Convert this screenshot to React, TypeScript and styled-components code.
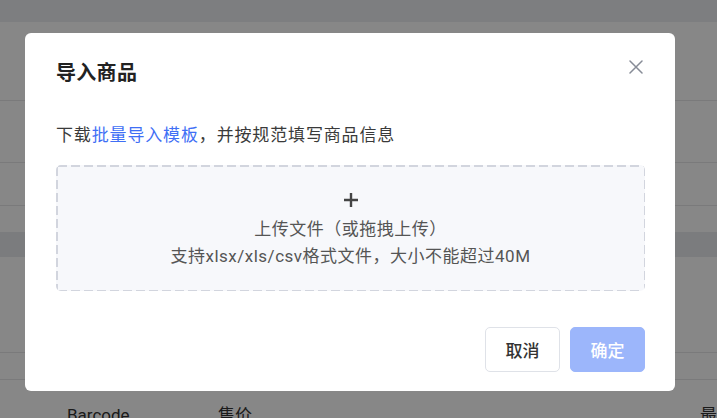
import styled, { createGlobalStyle } from 'styled-components';

const GlobalStyle = createGlobalStyle`
  html, body {
    margin: 0;
    padding: 0;
    overflow: hidden;
  }
  body {
    font-family: Roboto, "Noto Sans CJK SC", sans-serif;
    color: #333;
  }
`;

const Page = styled.div`
  width: 717px;
  height: 418px;
  background: #fff;
  display: flex;
  flex-direction: column;
`;

const TopBar = styled.div`
  height: 22px;
  flex-shrink: 0;
  background: #eceef2;
`;

const Block = styled.div<{ $h: number; $line?: boolean; $bg?: string }>`
  height: ${(p) => p.$h}px;
  flex-shrink: 0;
  background: ${(p) => p.$bg || '#fff'};
  border-bottom: ${(p) => (p.$line ? '1px solid #e6e6e8' : 'none')};
  box-sizing: border-box;
`;

const TableHead = styled.div`
  display: flex;
  align-items: center;
  padding: 23px 0 0 67px;
  font-size: 17px;
  line-height: 24px;
  color: #333;
`;

const HeadCell = styled.span<{ $w: number }>`
  width: ${(p) => p.$w}px;
  flex-shrink: 0;
`;

const Overlay = styled.div`
  position: fixed;
  inset: 0;
  background: rgba(0, 0, 0, 0.47);
  display: flex;
  align-items: flex-start;
  padding: 33px 0 0 25px;
`;

const Modal = styled.div`
  width: 650px;
  height: 358px;
  box-sizing: border-box;
  background: #fff;
  border-radius: 6px;
  padding: 28px 30px 19px 31px;
  display: flex;
  flex-direction: column;
`;

const Header = styled.div`
  display: flex;
  align-items: center;
  justify-content: space-between;
  height: 24px;
`;

const Title = styled.h3`
  margin: 0;
  font-size: 20px;
  line-height: 24px;
  font-weight: 700;
  letter-spacing: 0.3px;
  color: #222;
`;

const CloseButton = styled.button`
  border: none;
  background: none;
  padding: 0;
  width: 14px;
  height: 14px;
  margin: -12px 2px 0 0;
  cursor: pointer;
  display: flex;
`;

const Hint = styled.p`
  margin: 38px 0 0;
  font-size: 17px;
  line-height: 24px;
  letter-spacing: 0.85px;
  color: #3a3a3a;
`;

const Link = styled.a`
  color: #3f6ff5;
  text-decoration: none;
`;

const dash = '#d2d5de';

const DropZone = styled.div`
  margin-top: 18px;
  height: 126px;
  box-sizing: border-box;
  border-radius: 5px;
  background-color: #f7f8fb;
  background-image: linear-gradient(to right, ${dash} 69%, transparent 69%),
    linear-gradient(to right, ${dash} 69%, transparent 69%),
    linear-gradient(to bottom, ${dash} 69%, transparent 69%),
    linear-gradient(to bottom, ${dash} 69%, transparent 69%);
  background-size: 13px 1.5px, 13px 1.5px, 1.5px 13px, 1.5px 13px;
  background-position: 2px 0, 2px 100%, 0 2px, 100% 2px;
  background-repeat: repeat-x, repeat-x, repeat-y, repeat-y;
  padding-top: 28px;
  display: flex;
  flex-direction: column;
  align-items: center;
  cursor: pointer;
`;

const Plus = styled.svg`
  display: block;
  margin-bottom: 9px;
`;

const ZoneText = styled.div`
  font-size: 17px;
  line-height: 27px;
  letter-spacing: 0.5px;
  color: #555;
`;

const Footer = styled.div`
  margin-top: auto;
  display: flex;
  justify-content: flex-end;
  gap: 10px;
`;

const Button = styled.button<{ $primary?: boolean }>`
  width: 75px;
  height: 45px;
  box-sizing: border-box;
  border-radius: 5px;
  font-family: Roboto, "Noto Sans CJK SC", sans-serif;
  font-size: 17px;
  font-weight: 500;
  border: 1px solid ${(p) => (p.$primary ? '#9cb6fb' : '#dfe2e8')};
  background: ${(p) => (p.$primary ? '#9cb6fb' : '#fff')};
  color: ${(p) => (p.$primary ? '#fff' : '#333')};
  cursor: ${(p) => (p.$primary ? 'not-allowed' : 'pointer')};
`;

const App = () => {
  return (
    <>
      <GlobalStyle />
      <Page>
        <TopBar />
        <Block $h={79} $line />
        <Block $h={62} $line />
        <Block $h={43} $line />
        <Block $h={26} />
        <Block $h={25} $bg='#e9ebef' />
        <Block $h={96} $line />
        <Block $h={27} $line />
        <TableHead>
          <HeadCell $w={151}>Barcode</HeadCell>
          <HeadCell $w={482}>售价</HeadCell>
          <HeadCell $w={40}>最</HeadCell>
        </TableHead>
      </Page>

      <Overlay>
        <Modal>
          <Header>
            <Title>导入商品</Title>
            <CloseButton aria-label='关闭'>
              <svg width='14' height='14' viewBox='0 0 14 14'>
                <path d='M1 1L13 13M13 1L1 13' stroke='#878c97' strokeWidth='1.5' strokeLinecap='round' />
              </svg>
            </CloseButton>
          </Header>
          <Hint>
            下载<Link href='#'>批量导入模板</Link>，并按规范填写商品信息
          </Hint>
          <DropZone>
            <Plus width='14' height='14' viewBox='0 0 14 14'>
              <path d='M7 0V14M0 7H14' stroke='#444' strokeWidth='2.4' />
            </Plus>
            <ZoneText>上传文件（或拖拽上传）</ZoneText>
            <ZoneText>支持xlsx/xls/csv格式文件，大小不能超过40M</ZoneText>
          </DropZone>
          <Footer>
            <Button>取消</Button>
            <Button $primary>确定</Button>
          </Footer>
        </Modal>
      </Overlay>
    </>
  );
};

export default App;
